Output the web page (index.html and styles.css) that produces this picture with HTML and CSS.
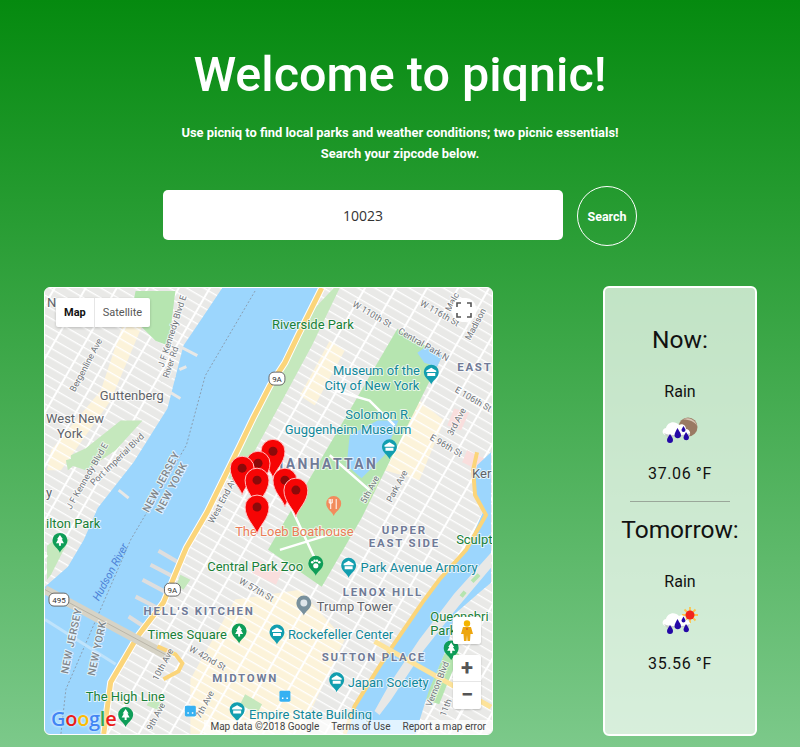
FILE: index.html
```html
<!DOCTYPE html>
<html>

<head>
    <title>Piqnic</title>
    <link rel="stylesheet" href="styles.css">
</head>

<body>
    <header class="intro">
        <h1>Welcome to piqnic!</h1>
        <p>Use picniq to find local parks and weather conditions; two picnic essentials!<br>Search your zipcode below.</p>
        <form class="search">
            <input type="text" class="zip" value="10023">
            <button type="button" class="go">Search</button>
        </form>
    </header>

    <main class="results">
        <div class="map">
            <svg class="map-canvas" viewBox="44 287 449 448" xmlns="http://www.w3.org/2000/svg">
                <defs>
                    <pattern id="streets" width="27" height="8.6" patternUnits="userSpaceOnUse" patternTransform="rotate(30)">
                        <rect x="0" y="0" width="27" height="1.3" fill="#fff"/>
                        <rect x="0" y="0" width="2" height="8.6" fill="#fff"/>
                    </pattern>
                    <symbol id="poi" overflow="visible">
                        <path d="M0,11 C-1,7 -7.5,4.500 -7.500,-1.500 A7.500,7.500 0 1 1 7.500,-1.500 C7.500,4.500 1,7 0,11Z"/>
                    </symbol>
                    <g id="tree"><path d="M0,-7 L3,-2.500 L1.800,-2.500 L4,1.500 L1,1.500 L1,4 L-1,4 L-1,1.500 L-4,1.500 L-1.800,-2.500 L-3,-2.500Z" fill="#fff"/></g>
                    <g id="hall"><path d="M0,-6 L5,-3 L5,-1.500 L-5,-1.500 L-5,-3Z M-4,-.5 L4,-.5 L4,2.500 L-4,2.500Z" fill="#fff"/></g>
                    <path id="red-pin" d="M0,27 C-2,19 -12,12 -12,0 A12,12 0 1 1 12,0 C12,12 2,19 0,27Z"/>
                </defs>

                <rect x="44" y="287" width="449" height="448" fill="#e9e9e7"/>
                <!-- warm blocks -->
                <path d="M235,600 L300,590 L345,640 L300,735 L190,735 L190,680Z M385,470 L420,400 L445,420 L420,480Z M300,395 L330,340 L345,350 L315,405Z M130,300 L100,390 L50,450 L46,470 L60,470 L110,400 L150,305Z" fill="#fcf3da"/>
                <rect x="44" y="287" width="449" height="448" fill="url(#streets)"/>
                <path d="M455,408 L470,412 L462,430 L448,425Z M468,450 L485,458 L480,470 L463,462Z M258,560 L282,572 L276,585 L252,573Z" fill="#f9dedd"/>

                <!-- parks -->
                <path d="M398,328 L443,355 L362,518 L322,587 L268,550Z" fill="#b6e5b0"/>
                <path d="M334,287 L340,287 L312,345 L285,395 L255,450 L235,482 L220,472 L248,420 L278,368 L305,318Z" fill="#c5e8bd"/>
                <path d="M135,290 L175,290 L168,345 L155,340 L130,315Z" fill="#b6e5b0"/>
                <path d="M70,455 L85,448 L120,420 L142,420 L115,450 L85,470 L70,465Z M65,460 L72,458 L73,465 L67,470Z" fill="#c5e8bd"/>
                <path d="M46,546 L60,535 L68,540 L50,575 L46,580Z" fill="#c5e8bd"/>
                <path d="M452,650 L445,655 L425,700 L440,705 L460,655Z" fill="#b6e5b0"/>
                <path d="M150,700 L165,705 L160,712 L146,706Z M180,575 L190,580 L183,590 L176,585Z M245,695 L262,705 L257,715 L240,705Z" fill="#c5e8bd"/>

                <!-- water -->
                <path d="M222,287 L322,287 L298,335 L285,362 L270,385 L253,418 L240,445 L207,512 L183,550 L163,603 L137,637 L110,683 L103,735 L44,735 L44,587 L67,567 L83,540 L97,508 L133,462 L167,408 L183,345 L200,320Z" fill="#9cd6fd"/>
                <path d="M492,452 L478,465 L474,490 L484,512 L467,550 L440,580 L423,603 L393,647 L378,670 L355,707 L345,735 L416,735 L430,690 L445,655 L450,640 L455,615 L480,593 L492,583Z" fill="#9cd6fd"/>
                <path d="M418,352 L428,345 L443,355 L438,366 L425,362Z M350,435 L378,420 L399,420 L385,455 L362,478 L347,465Z" fill="#9cd6fd"/>
                <path d="M492,553 L492,568 L460,606 L425,650 L392,700 L380,716 L375,712 L390,685 L420,640 L455,594Z" fill="#e8e8e6"/>
                <path d="M473,582 L480,575 M462,597 L466,592" stroke="#b6e5b0" stroke-width="4" fill="none"/>
                <!-- piers -->
                <path d="M182,565 L158,551 M175,578 L150,565 M170,595 L142,580 M160,610 L135,597 M145,628 L128,617" stroke="#dedede" stroke-width="4" fill="none"/>
                <path d="M179,369 L186,366 M178,345 L197,355 M175,375 L160,380 M180,398 L170,392 M118,490 L128,498" stroke="#e8e8e6" stroke-width="3" fill="none"/>
                <path d="M255,290 L205,375 L186,445 L130,540 L65,690 L60,735" stroke="#8a9eb0" stroke-width="1" stroke-dasharray="2 2" fill="none"/>
                <path d="M44,620 L115,665" stroke="#bfe3fb" stroke-width="3" fill="none"/>

                <!-- roads -->
                <path d="M322,287 L298,335 L285,362 L270,385 L253,418 L240,445 L207,512 L186,548 L183,555 L163,603 L137,637 L110,683 L103,735" stroke="#fff" stroke-width="7" fill="none"/>
                <path d="M322,287 L298,335 L285,362 L270,385 L253,418 L240,445 L207,512 L186,548 L183,555 L163,603 L137,637 L110,683 L103,735" stroke="#fbd57a" stroke-width="5" fill="none"/>
                <path d="M478,452 L474,470 L476,495 L487,515 L467,550 L440,580 L423,603 L393,647 L378,670 L355,707 L345,735" stroke="#fbd57a" stroke-width="4" fill="none"/>
                <path d="M44,590 L170,658" stroke="#d6d3c6" stroke-width="9" fill="none"/>
                <path d="M44,590 L170,658" stroke="#b9b5a8" stroke-width="1" fill="none"/>
                <path d="M157,647 L175,655 L182,664 L178,672 L163,680" stroke="#fbd57a" stroke-width="4" fill="none"/>
                <path d="M375,642 L492,708" stroke="#fde39a" stroke-width="5" fill="none"/>
                <path d="M335,390 L370,400 L395,425 M262,445 L318,565 M330,455 L370,490 M280,550 L345,530 M450,735 L480,680" stroke="#fff" stroke-width="2.500" fill="none"/>
                <path d="M46,555 L30,570" stroke="#fff" stroke-width="3" fill="none"/>

                <!-- labels -->
                <text class="lbl park" x="272" y="328">Riverside Park</text>
                <text class="lbl poi" x="377" y="374" text-anchor="middle">Museum of the</text>
                <text class="lbl poi" x="420" y="389" text-anchor="end">City of New York</text>
                <text class="lbl poi" x="412" y="419" text-anchor="end">Solomon R.</text>
                <text class="lbl poi" x="412" y="434" text-anchor="end">Guggenheim Museum</text>
                <text class="lbl area big" x="271" y="469">MANHATTAN</text>
                <text class="lbl area" x="458" y="370">EAST</text>
                <text class="lbl city" x="473" y="478">Ker</text>
                <text class="lbl city" x="99" y="399">Guttenberg</text>
                <text class="lbl city" x="45" y="423">West New</text>
                <text class="lbl city" x="56" y="438">York</text>
                <text class="lbl city" x="45" y="497">y</text>
                <text class="lbl city" x="46" y="306">N</text>
                <text class="lbl street" transform="translate(74,392) rotate(-62)">Bergenline Ave</text>
                <text class="lbl street" transform="translate(163,367) rotate(-72)">J F Kennedy Blvd E</text>
                <text class="lbl street" transform="translate(168,378) rotate(-72)">River Rd</text>
                <text class="lbl street" transform="translate(93,486) rotate(-44)">Port Imperial Blvd</text>
                <text class="lbl street" transform="translate(70,510) rotate(-60)">J F Kennedy Blvd E</text>
                <text class="lbl state" transform="translate(148,513) rotate(-62)">NEW JERSEY</text>
                <text class="lbl state" transform="translate(161,514) rotate(-62)">NEW YORK</text>
                <text class="lbl state" transform="translate(67,675) rotate(-78)">NEW JERSEY</text>
                <text class="lbl state" transform="translate(94,677) rotate(-78)">NEW YORK</text>
                <text class="lbl street" transform="translate(213,524) rotate(-62)">West End Ave</text>
                <text class="lbl street" transform="translate(352,305) rotate(30)">W 110th St</text>
                <text class="lbl street" transform="translate(420,304) rotate(30)">W 116th St</text>
                <text class="lbl street" transform="translate(398,332) rotate(30)">Central Park N</text>
                <text class="lbl street" transform="translate(471,340) rotate(-62)">Madison</text>
                <text class="lbl street" transform="translate(451,311) rotate(-62)">Malc</text>
                <text class="lbl street" transform="translate(455,391) rotate(30)">E 106th St</text>
                <text class="lbl street" transform="translate(453,436) rotate(-62)">3rd Ave</text>
                <text class="lbl street" transform="translate(430,439) rotate(30)">E 96th St</text>
                <text class="lbl street" transform="translate(366,504) rotate(-62)">5th Ave</text>
                <text class="lbl street" transform="translate(392,503) rotate(-62)">Park Ave</text>
                <text class="lbl orange" x="235" y="536">The Loeb Boathouse</text>
                <text class="lbl park" x="45" y="528">ilton Park</text>
                <text class="lbl river" transform="translate(98,602) rotate(-62)">Hudson River</text>
                <text class="lbl area" x="143" y="615">HELL'S KITCHEN</text>
                <text class="lbl park" x="147" y="640">Times Square</text>
                <text class="lbl street" transform="translate(188,651) rotate(30)">W 42nd St</text>
                <text class="lbl street" transform="translate(157,682) rotate(-62)">10th Ave</text>
                <text class="lbl street" transform="translate(151,732) rotate(-62)">9th Ave</text>
                <text class="lbl street" transform="translate(200,720) rotate(-62)">7th Ave</text>
                <text class="lbl area" x="212" y="683">MIDTOWN</text>
                <text class="lbl park" x="85" y="702">The High Line</text>
                <text class="lbl poi" x="249" y="720">Empire State Building</text>
                <text class="lbl park" x="207" y="571">Central Park Zoo</text>
                <text class="lbl street" transform="translate(238,583) rotate(30)">W 57th St</text>
                <text class="lbl area" x="405" y="534" text-anchor="middle">UPPER</text>
                <text class="lbl area" x="405" y="547" text-anchor="middle">EAST SIDE</text>
                <text class="lbl park" x="457" y="544">Sculpt</text>
                <text class="lbl poi" x="361" y="572">Park Avenue Armory</text>
                <text class="lbl area" x="343" y="596">LENOX HILL</text>
                <text class="lbl city" x="317" y="611">Trump Tower</text>
                <text class="lbl poi" x="288" y="640">Rockefeller Center</text>
                <text class="lbl area" x="322" y="662">SUTTON PLACE</text>
                <text class="lbl poi" x="348" y="688">Japan Society</text>
                <text class="lbl park" x="431" y="621">Queensbri</text>
                <text class="lbl park" x="431" y="636">Park</text>
                <text class="lbl street" transform="translate(432,708) rotate(-68)">Vernon Blvd</text>
                <text class="lbl street" transform="translate(446,718) rotate(-68)">11th</text>

                <!-- shields -->
                <g class="shield" transform="translate(277,378)"><rect x="-8" y="-6.500" width="16" height="13" rx="5"/><text y="3" text-anchor="middle">9A</text></g>
                <g class="shield" transform="translate(172,590)"><rect x="-8" y="-6.500" width="16" height="13" rx="5"/><text y="3" text-anchor="middle">9A</text></g>
                <g class="shield" transform="translate(58,600)"><rect x="-10" y="-6.500" width="20" height="13" rx="5"/><text y="3" text-anchor="middle">495</text></g>

                <!-- place markers -->
                <g fill="#129eaf">
                    <g transform="translate(432,373)"><use href="#poi"/><use href="#hall"/></g>
                    <g transform="translate(390,448)"><use href="#poi"/><use href="#hall"/></g>
                    <g transform="translate(349,567)"><use href="#poi"/><use href="#hall"/></g>
                    <g transform="translate(277,634)"><use href="#poi"/><use href="#hall"/></g>
                    <g transform="translate(337,682)"><use href="#poi"/><use href="#hall"/></g>
                    <g transform="translate(237,712)"><use href="#poi"/><use href="#hall"/></g>
                </g>
                <g fill="#0f9d58">
                    <g transform="translate(59,542)"><use href="#poi"/><use href="#tree"/></g>
                    <g transform="translate(239,633)"><use href="#poi"/><use href="#tree"/></g>
                    <g transform="translate(125,717)"><use href="#poi"/><use href="#tree"/></g>
                    <g transform="translate(452,650)"><use href="#poi"/><use href="#tree"/></g>
                    <g transform="translate(316,565)"><use href="#poi"/><circle cy="1" r="2.600" fill="#fff"/><circle cx="-3.500" cy="-2.500" r="1.300" fill="#fff"/><circle cx="-1.200" cy="-4" r="1.300" fill="#fff"/><circle cx="1.200" cy="-4" r="1.300" fill="#fff"/><circle cx="3.500" cy="-2.500" r="1.300" fill="#fff"/></g>
                </g>
                <g transform="translate(304,605)" fill="#78909c"><use href="#poi"/><circle cy="-1.500" r="3.500" fill="#dfe6ea"/></g>
                <g transform="translate(334,505)" fill="#f28b5c"><use href="#poi"/><path d="M-3,-6 L-3,4 M-4.500,-6 L-4.500,-2 L-1.500,-2 L-1.500,-6 M2.500,-6 L2.500,4" stroke="#fff" fill="none"/></g>
                <g class="subway" transform="translate(190,712)"><rect x="-5.500" y="-5.500" width="11" height="11" rx="1.500"/><rect x="-3" y="-3.500" width="6" height="4" fill="#fff"/><path d="M-3,2 L-1.500,2 M1.500,2 L3,2" stroke="#fff" stroke-width="1.500"/></g>
                <g class="subway" transform="translate(285,697)"><rect x="-5.500" y="-5.500" width="11" height="11" rx="1.500"/><rect x="-3" y="-3.500" width="6" height="4" fill="#fff"/><path d="M-3,2 L-1.500,2 M1.500,2 L3,2" stroke="#fff" stroke-width="1.500"/></g>

                <!-- search results -->
                <g class="pin" transform="translate(273,451)"><use href="#red-pin"/><circle r="4.500"/></g>
                <g class="pin" transform="translate(258,463)"><use href="#red-pin"/><circle r="4.500"/></g>
                <g class="pin" transform="translate(242,468)"><use href="#red-pin"/><circle r="4.500"/></g>
                <g class="pin" transform="translate(257,480)"><use href="#red-pin"/><circle r="4.500"/></g>
                <g class="pin" transform="translate(285,480)"><use href="#red-pin"/><circle r="4.500"/></g>
                <g class="pin" transform="translate(296,490)"><use href="#red-pin"/><circle r="4.500"/></g>
                <g class="pin" transform="translate(257,507)"><use href="#red-pin"/><circle r="4.500"/></g>
            </svg>

            <div class="map-type">
                <span class="on">Map</span>
                <span>Satellite</span>
            </div>
            <div class="fullscreen">
                <svg width="16" height="16" viewBox="0 0 16 16"><path d="M1,5 L1,1 L5,1 M11,1 L15,1 L15,5 M15,11 L15,15 L11,15 M5,15 L1,15 L1,11" stroke="#555" stroke-width="1.600" fill="none"/></svg>
            </div>
            <div class="pegman">
                <svg width="14" height="21" viewBox="0 0 14 21"><circle cx="7" cy="3.500" r="3.200" fill="#f4b400"/><path d="M3,7 L11,7 L13,14 L10.500,14 L10,21 L7.500,21 L7,15 L6.500,21 L4,21 L3.500,14 L1,14Z" fill="#eda60f"/><circle cx="7" cy="9" r=".9" fill="#d9662b"/></svg>
            </div>
            <div class="zoom-box">
                <span class="zoom-in">+</span>
                <span class="zoom-out">&minus;</span>
            </div>
            <div class="google"><b class="blue">G</b><b class="red">o</b><b class="yellow">o</b><b class="blue">g</b><b class="green">l</b><b class="red">e</b></div>
            <div class="attribution">
                <span>Map data ©2018 Google</span>
                <span>Terms of Use</span>
                <span>Report a map error</span>
            </div>
        </div>

        <aside class="weather">
            <h2>Now:</h2>
            <div class="cond">Rain</div>
            <svg class="wx" width="40" height="28" viewBox="0 0 40 28">
                <circle cx="27" cy="10" r="9.500" fill="#9a7a63"/>
                <path d="M22,2.500 A9.500,9.500 0 0 1 36,9 C34,5 29,2.500 22,2.500Z" fill="#d8c6b4"/>
                <path d="M5,18 C1,18 0,12 5,11 C6,5 14,3 18,8 C22,6 25,9 25,12 C29,12 31,18 27,19 L6,19Z" fill="#fff"/>
                <path d="M3,16 C8,19 22,19 29,16 L28,19 L6,20Z" fill="#c9cdc9"/>
                <path d="M9,17 C11,20 12,21 12,23 A3,3 0 0 1 6,23 C6,21 8,19 9,17Z M16.500,11 C18.500,15 20,16 20,18.500 A3.300,3.300 0 0 1 13.500,18.500 C13.500,16 15,14 16.500,11Z M25,15 C27,18 28,19 28,21 A2.800,2.800 0 0 1 22.500,21 C22.500,19 24,17 25,15Z M22.500,9 C23.500,11 24.500,12 24.500,13 A2,2 0 0 1 20.500,13 C20.500,12 21.500,11 22.500,9Z" fill="#2408a6"/>
            </svg>
            <div class="temp">37.06 °F</div>
            <hr>
            <h2>Tomorrow:</h2>
            <div class="cond">Rain</div>
            <svg class="wx" width="40" height="28" viewBox="0 0 40 28">
                <path d="M29,0 L29,16 M21,8 L37,8 M23.500,2.500 L34.500,13.500 M34.500,2.500 L23.500,13.500" stroke="#fdc34d" stroke-width="1.800"/>
                <circle cx="29" cy="8" r="4.500" fill="#f2241c"/>
                <path d="M5,19 C1,19 0,13 5,12 C6,6 14,4 18,9 C22,7 25,10 25,13 C29,13 31,19 27,20 L6,20Z" fill="#fff"/>
                <path d="M3,17 C8,20 22,20 29,17 L28,20 L6,21Z" fill="#c9cdc9"/>
                <path d="M9,18 C11,21 12,22 12,24 A3,3 0 0 1 6,24 C6,22 8,20 9,18Z M16.500,12 C18.500,16 20,17 20,19.500 A3.300,3.300 0 0 1 13.500,19.500 C13.500,17 15,15 16.500,12Z M25,17 C27,20 28,21 28,23 A2.800,2.800 0 0 1 22.500,23 C22.500,21 24,19 25,17Z M22.500,9.500 C23.500,11.500 24.500,12.500 24.500,13.500 A2,2 0 0 1 20.500,13.500 C20.500,12.500 21.500,11.500 22.500,9.500Z" fill="#2408a6"/>
            </svg>
            <div class="temp">35.56 °F</div>
        </aside>
    </main>
</body>

</html>
```

FILE: styles.css
```css
body {
    font-family: Roboto, "Open Sans", sans-serif;
    background: linear-gradient(#058a0f, #7cc98a);
    margin: 0;
    height: 747px;
    overflow: hidden;
    color: #111;
}

.intro {
    text-align: center;
    color: #fff;
    padding-top: 45px;
}

h1 {
    font-size: 48.5px;
    font-weight: 500;
    line-height: 60px;
    margin: 0 0 17px;
}

.intro p {
    font-size: 12.9px;
    font-weight: 700;
    line-height: 21px;
    margin: 0;
}

.search {
    display: flex;
    justify-content: center;
    align-items: center;
    gap: 14px;
    margin-top: 22px;
}

.zip {
    box-sizing: border-box;
    width: 400px;
    height: 50px;
    border: 0;
    border-radius: 5px;
    background: #fff;
    font-family: "Open Sans", sans-serif;
    font-size: 14px;
    color: #333;
    text-align: center;
    margin-bottom: 2px;
}

.go {
    box-sizing: border-box;
    width: 60px;
    height: 60px;
    border: 1.5px solid #fff;
    border-radius: 50%;
    background: transparent;
    color: #fff;
    font-family: Roboto, sans-serif;
    font-size: 12.5px;
    font-weight: 700;
    padding: 0;
}

.results {
    display: flex;
    align-items: flex-start;
    gap: 110px;
    padding: 41px 0 0 44px;
}

/* map */
.map {
    position: relative;
    box-sizing: border-box;
    width: 449px;
    height: 448px;
    border: 1px solid #fff;
    border-radius: 6px;
    overflow: hidden;
    background: #e9e9e7;
    font-family: Roboto, sans-serif;
}

.map-canvas {
    display: block;
    width: 100%;
    height: 100%;
}

.lbl {
    font-family: Roboto, sans-serif;
    font-size: 13px;
    stroke: #fff;
    stroke-width: 2px;
    stroke-opacity: .7;
    paint-order: stroke;
    stroke-linejoin: round;
}

.park { fill: #188038; }
.poi { fill: #12889a; }
.orange { fill: #ea7d57; }
.city { fill: #5f6368; }
.area { fill: #707b98; font-size: 11.5px; font-weight: 700; letter-spacing: 1.800px; }
.area.big { font-size: 14px; letter-spacing: 2.400px; }
.street { fill: #70757a; font-size: 9px; }
.state { fill: #80868b; font-size: 10.500px; font-weight: 500; letter-spacing: .5px; }
.river { fill: #4d82d6; font-size: 11px; font-style: italic; stroke: none; }

.shield rect { fill: #fff; stroke: #666; stroke-width: 1px; }
.shield text { font-size: 8px; font-family: Roboto, sans-serif; fill: #333; }
.subway rect { fill: #36b1f2; }

.pin { fill: #f60505; stroke: none; }
.pin use { stroke: #ffc4c4; stroke-width: 1px; }
.pin circle { fill: #8b0a0a; }

.map-type {
    position: absolute;
    top: 10px;
    left: 11px;
    display: flex;
    height: 29px;
    background: #fff;
    border-radius: 2px;
    box-shadow: 0 1px 3px rgba(0, 0, 0, 0.2);
    font-size: 11px;
    line-height: 29px;
    color: #565656;
}

.map-type span {
    padding: 0 8px;
}

.map-type .on {
    font-weight: 700;
    color: #111;
    border-right: 1px solid #e6e6e6;
}

.fullscreen {
    position: absolute;
    top: 10px;
    right: 16px;
    display: flex;
    align-items: center;
    justify-content: center;
    width: 24px;
    height: 24px;
    background: #fff;
    border-radius: 10px;
}

.pegman,
.zoom-box {
    position: absolute;
    right: 11px;
    width: 28px;
    background: #fff;
    border-radius: 2px;
    box-shadow: 0 1px 2px rgba(0, 0, 0, 0.2);
}

.pegman {
    top: 329px;
    height: 27px;
    display: flex;
    align-items: center;
    justify-content: center;
}

.zoom-box {
    top: 367px;
    height: 54px;
    color: #555;
    font-size: 22px;
    font-weight: 700;
    text-align: center;
}

.zoom-box span {
    display: block;
    height: 27px;
    line-height: 25px;
}

.zoom-in {
    box-sizing: border-box;
    border-bottom: 1px solid #e6e6e6;
}

.google {
    position: absolute;
    left: 6px;
    bottom: 3px;
    font-family: "Open Sans", sans-serif;
    font-size: 20px;
    line-height: 24px;
    letter-spacing: -.3px;
    text-shadow: 0 0 3px #fff;
}

.google b { font-weight: 600; }
.blue { color: #4285f4; }
.red { color: #ea1c1c; }
.yellow { color: #fbbc05; }
.green { color: #34a853; }

.attribution {
    position: absolute;
    right: 0;
    bottom: 0;
    display: flex;
    height: 14px;
    background: rgba(255, 255, 255, 0.7);
    font-size: 10px;
    line-height: 14px;
    color: #444;
}

.attribution span {
    padding: 0 6px;
}

/* weather */
.weather {
    box-sizing: border-box;
    width: 154px;
    height: 450px;
    margin-top: -1px;
    border: 2px solid #fff;
    border-radius: 6px;
    background: rgba(255, 255, 255, 0.7);
    text-align: center;
    padding-top: 37px;
}

.weather h2 {
    font-size: 24.5px;
    font-weight: 400;
    line-height: 30px;
    margin: 0;
}

.cond {
    font-size: 16px;
    line-height: 20px;
    margin-top: 27px;
}

.wx {
    display: block;
    margin: 15px auto 0;
    transform: translateX(1px);
}

.temp {
    font-size: 16px;
    line-height: 20px;
    letter-spacing: .6px;
    margin-top: 19px;
}

.weather hr {
    width: 100px;
    height: 1px;
    border: 0;
    background: #9aa79a;
    margin: 17px auto 13px;
}
```
